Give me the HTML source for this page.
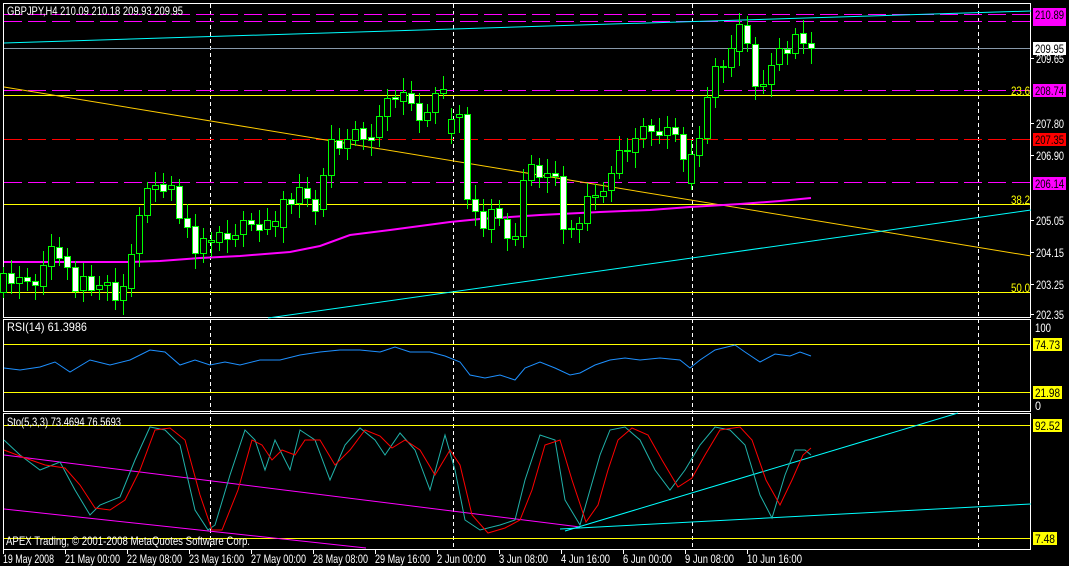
<!DOCTYPE html>
<html><head><meta charset="utf-8"><style>
html,body{margin:0;padding:0;background:#000;width:1069px;height:566px;overflow:hidden}
svg{display:block}
text{font-family:"Liberation Sans",sans-serif;font-size:12px}
</style></head><body>
<svg id="s" width="1069" height="566" xmlns="http://www.w3.org/2000/svg" shape-rendering="crispEdges">
<rect width="1069" height="566" fill="#000"/>
<rect x="3.5" y="3.5" width="1027" height="314" fill="none" stroke="#fff"/>
<rect x="3.5" y="319.5" width="1027" height="92" fill="none" stroke="#fff"/>
<rect x="3.5" y="413.5" width="1027" height="136" fill="none" stroke="#fff"/>
<g stroke="#fff" stroke-dasharray="4,3">
<line x1="210.5" y1="4" x2="210.5" y2="549"/><line x1="453.5" y1="4" x2="453.5" y2="549"/>
<line x1="692.5" y1="4" x2="692.5" y2="549"/><line x1="978.5" y1="4" x2="978.5" y2="549"/>
</g>
<g stroke="#ff00ff" stroke-dasharray="18,6" stroke-width="1">
<line x1="4" y1="14.5" x2="1030" y2="14.5"/><line x1="4" y1="21.5" x2="1030" y2="21.5"/>
<line x1="4" y1="90.5" x2="1030" y2="90.5"/><line x1="4" y1="182.5" x2="1030" y2="182.5"/>
</g>
<line x1="4" y1="139.5" x2="1030" y2="139.5" stroke="#ff0000" stroke-dasharray="18,6"/>
<line x1="4" y1="48.5" x2="1030" y2="48.5" stroke="#8899aa"/>
<g stroke="#ffff00">
<line x1="4" y1="95.5" x2="1030" y2="95.5"/><line x1="4" y1="204.5" x2="1030" y2="204.5"/><line x1="4" y1="292.5" x2="1030" y2="292.5"/>
<line x1="4" y1="344.5" x2="1030" y2="344.5"/><line x1="4" y1="392.5" x2="1030" y2="392.5"/>
<line x1="4" y1="425.5" x2="1030" y2="425.5"/><line x1="4" y1="538.5" x2="1030" y2="538.5"/>
</g>
<g shape-rendering="auto" fill="none">
<line x1="4" y1="43" x2="1031" y2="11" stroke="#00ffff"/>
<line x1="4" y1="87" x2="1031" y2="256" stroke="#ffcc00"/>
<line x1="268" y1="318" x2="1031" y2="210" stroke="#00ffff"/>
<polyline stroke="#ff00ff" stroke-width="2" points="4,262 130,262 160,261 200,258 240,256 290,252 320,246 350,235 390,230 420,226 450,222 480,219 540,215 600,212 650,210 690,207 740,204 780,201 811,198"/>
<polyline stroke="#1e90ff" points="4,368 20,370 40,367 55,362 70,372 90,360 110,365 130,360 150,350 165,352 180,365 195,360 210,365 225,362 240,365 260,360 280,360 300,355 320,352 340,350 360,350 380,352 395,347 410,352 430,352 445,356 460,362 470,375 485,378 500,375 515,380 525,368 540,362 555,368 570,375 580,373 595,365 610,360 625,358 640,360 660,358 680,360 690,368 700,360 715,350 735,345 745,352 760,362 775,354 790,356 800,352 811,356"/>
<line x1="4" y1="455" x2="580" y2="527" stroke="#ff00ff"/>
<line x1="4" y1="509" x2="366" y2="548" stroke="#ff00ff"/>
<line x1="565" y1="531" x2="958" y2="413" stroke="#00ffff"/>
<line x1="560" y1="529" x2="1031" y2="504" stroke="#00ffff"/>
<polyline stroke="#20b2aa" points="4,440 20,455 40,470 60,462 75,490 90,515 100,505 120,497 135,460 150,427 165,430 180,445 195,510 208,530 215,525 230,475 245,430 255,440 265,470 275,440 290,470 300,430 315,440 330,480 345,445 360,428 375,440 385,455 400,433 415,450 430,490 445,435 455,470 465,520 480,530 500,525 515,520 525,480 540,435 555,440 565,500 580,525 590,490 600,455 610,430 625,427 640,440 655,470 670,490 685,470 700,445 715,427 730,430 745,445 760,495 772,518 785,475 795,450 805,450 811,455"/>
<polyline stroke="#ff0000" points="4,450 25,458 45,465 65,468 80,485 95,508 110,510 125,500 140,470 155,430 170,428 185,440 200,495 212,530 222,530 238,490 252,440 262,445 272,460 282,450 295,455 305,440 320,440 335,465 350,450 365,430 380,436 392,448 405,440 420,450 435,475 450,450 460,465 472,515 488,533 505,528 520,520 532,490 545,445 560,440 572,480 586,522 598,505 608,470 618,440 632,428 648,435 662,460 678,487 692,478 705,455 720,430 740,427 752,440 766,480 780,505 792,480 803,455 811,448"/>
</g>
<g id="c"></g>
<text x="7" y="15" fill="#fff" textLength="176" lengthAdjust="spacingAndGlyphs">GBPJPY,H4  210.09 210.18 209.93 209.95</text>
<text x="7" y="331" fill="#fff" textLength="80" lengthAdjust="spacingAndGlyphs">RSI(14) 61.3986</text>
<text x="7" y="426" fill="#fff" textLength="114" lengthAdjust="spacingAndGlyphs">Sto(5,3,3) 73.4694 76.5693</text>
<text x="6" y="545" fill="#fff" textLength="244" lengthAdjust="spacingAndGlyphs">APEX Trading, © 2001-2008 MetaQuotes Software Corp.</text>
<g fill="#ffff00"><text x="1011" y="95" textLength="19" lengthAdjust="spacingAndGlyphs">23.6</text><text x="1011" y="204" textLength="19" lengthAdjust="spacingAndGlyphs">38.2</text><text x="1011" y="292" textLength="19" lengthAdjust="spacingAndGlyphs">50.0</text></g>
<g fill="#fff" id="ax"></g>
<g id="boxes"></g>
<g fill="#fff" id="tl"></g>
<g stroke="#fff" id="ticks"></g>
</svg>
<script>
var d=[[273,292,0],[273,283,1],[277,283,0],[277,281,1],[281,285,1],[265,286,0],[246,266,0],[247,258,1],[256,267,1],[267,291,1],[276,290,0],[276,290,1],[285,289,0],[282,285,0],[282,300,1],[286,300,0],[254,288,0],[215,253,0],[188,215,0],[185,189,0],[184,191,1],[185,189,0],[186,218,1],[218,227,1],[226,253,1],[238,253,0],[240,242,0],[232,242,0],[233,239,1],[235,239,0],[220,234,0],[220,224,1],[224,230,1],[220,229,0],[221,226,0],[199,227,0],[199,204,1],[187,203,0],[188,198,1],[199,211,1],[175,209,0],[139,175,0],[140,148,1],[139,148,0],[129,140,0],[128,139,1],[137,140,1],[116,137,0],[98,116,0],[97,99,1],[92,101,0],[93,103,1],[103,120,1],[112,120,0],[93,112,0],[89,93,0],[119,133,0],[114,117,0],[114,199,1],[199,211,1],[211,228,1],[209,229,0],[208,218,1],[219,238,1],[236,239,0],[180,236,0],[164,180,0],[165,177,1],[173,177,0],[173,176,1],[176,229,1],[228,229,0],[223,229,0],[196,223,0],[195,197,0],[191,196,0],[173,190,0],[150,173,0],[150,151,0],[138,152,0],[126,138,0],[125,131,1],[131,135,1],[127,135,0],[127,134,1],[134,159,1],[154,183,0],[138,155,0],[97,138,0],[66,97,0],[66,67,0],[48,67,0],[24,51,0],[25,43,1],[44,86,1],[84,86,0],[65,84,0],[48,64,0],[49,53,1],[34,53,0],[33,43,1],[43,48,1]];
var h='';for(var k=0;k<d.length;k++){var x=3+8*k,t=d[k][0],b=d[k][1],w=d[k][2];var wt=t-6-(k*7%9),wb=b+6+(k*5%11);
h+='<line x1="'+(x+.5)+'" y1="'+wt+'" x2="'+(x+.5)+'" y2="'+wb+'" stroke="#00ff00"/>';
var bh=Math.max(b-t,1);h+='<rect x="'+(x-2.5)+'" y="'+(t+.5)+'" width="6" height="'+bh+'" fill="'+(w?'#fff':'#000')+'" stroke="#00ff00"/>';}
document.getElementById('c').innerHTML=h;
function T(x,y,s,l,f){return '<text x="'+x+'" y="'+y+'" textLength="'+l+'" lengthAdjust="spacingAndGlyphs"'+(f?' fill="'+f+'"':'')+'>'+s+'</text>';}
var a='';[[62,'209.65'],[127,'207.80'],[159,'206.90'],[224,'205.05'],[256,'204.15'],[288,'203.25'],[318,'202.35']].forEach(function(p){a+=T(1036,p[0]+1,p[1],28);});
a+=T(1035,332,'100',16)+T(1035,410,'0',6);
document.getElementById('ax').innerHTML=a;
var bx='';[[8,'210.89','#ff00ff'],[42,'209.95','#fff'],[84,'208.74','#ff00ff'],[133,'207.35','#ff0000'],[177,'206.14','#ff00ff'],[338,'74.73','#ffff00'],[386,'21.98','#ffff00'],[419,'92.52','#ffff00'],[532,'7.48','#ffff00']].forEach(function(p){var wd=p[1].length==4?24:p[1].length==5?29:33;
bx+='<rect x="1033" y="'+p[0]+'" width="'+wd+'" height="13" fill="'+p[2]+'"/>'+T(1035,p[0]+11,p[1],wd-4,'#000');});
bx+='<rect x="1033" y="21" width="33" height="5" fill="#ff00ff"/>';
document.getElementById('boxes').innerHTML=bx;
var L=['19 May 2008','21 May 00:00','22 May 08:00','23 May 16:00','27 May 00:00','28 May 08:00','29 May 16:00','2 Jun 00:00','3 Jun 08:00','4 Jun 16:00','6 Jun 00:00','9 Jun 08:00','10 Jun 16:00'];
var tl='';L.forEach(function(s,i){var x=3+62*i;var l=s.length==11?(s.indexOf('2008')>0?51:49):(s.length==10?44:55);tl+=T(x,563,s,l);});
document.getElementById('tl').innerHTML=tl;
var tk='';for(var i=0;i<13;i++){var x=3.5+62*i;tk+='<line x1="'+x+'" y1="550" x2="'+x+'" y2="554"/>';}
[58,123,155,220,252,284,314].forEach(function(y){tk+='<line x1="1031" y1="'+(y+.5)+'" x2="1034" y2="'+(y+.5)+'"/>';});
document.getElementById('ticks').innerHTML=tk;
</script>
</body></html>
